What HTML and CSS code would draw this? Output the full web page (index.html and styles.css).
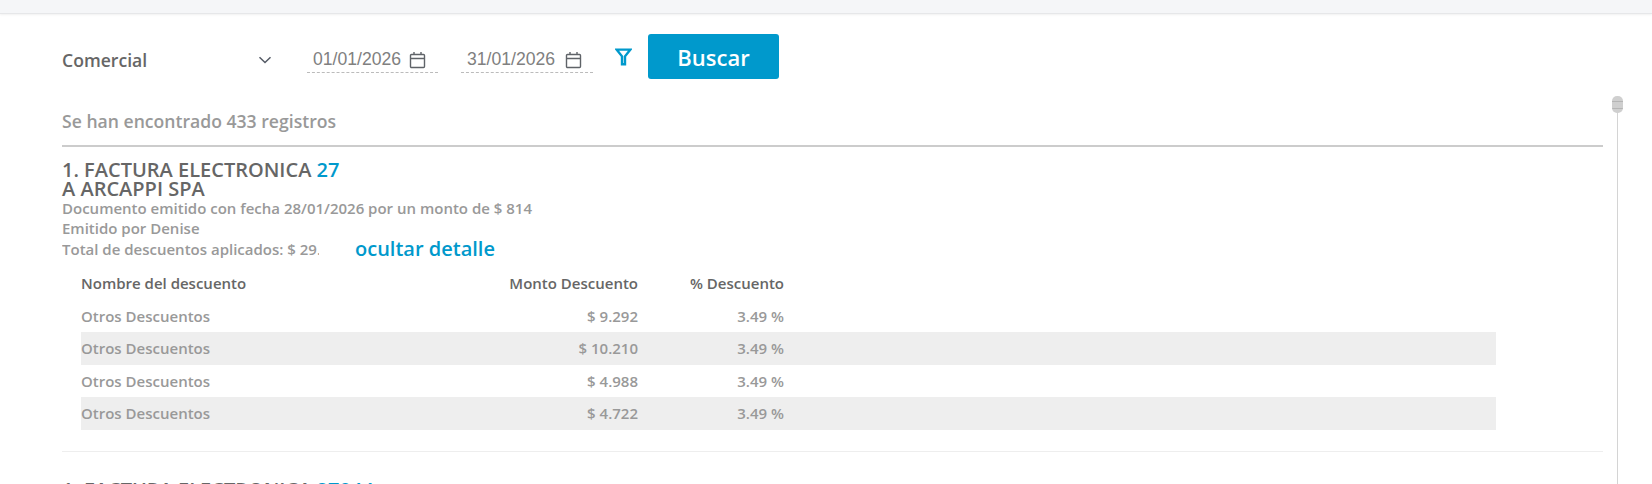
FILE: index.html
```html
<!DOCTYPE html>
<html lang="es">
<head>
    <meta charset="UTF-8">
    <meta name="viewport" content="width=device-width, initial-scale=1.0">
    <title>Descuentos</title>
    <link rel="stylesheet" href="styles.css">
</head>
<body>
    <div class="topbar"></div>
    <main class="content">
        <div class="filters">
            <div class="select">
                <span>Comercial</span>
                <svg class="chevron" width="14" height="8" viewBox="0 0 14 8"><path d="M1.5 1.2 7 6.5l5.5-5.3" fill="none" stroke="#555b66" stroke-width="1.5"/></svg>
            </div>
            <div class="date">
                <span>01/01/2026</span>
                <svg width="17" height="18" viewBox="0 0 17 18"><path d="M2.5 3.5h12a1 1 0 0 1 1 1v11a1 1 0 0 1-1 1h-12a1 1 0 0 1-1-1v-11a1 1 0 0 1 1-1zM1.5 7.5h14M5 1v3M12 1v3" fill="none" stroke="#5f6368" stroke-width="1.4"/></svg>
            </div>
            <div class="date">
                <span>31/01/2026</span>
                <svg width="17" height="18" viewBox="0 0 17 18"><path d="M2.5 3.5h12a1 1 0 0 1 1 1v11a1 1 0 0 1-1 1h-12a1 1 0 0 1-1-1v-11a1 1 0 0 1 1-1zM1.5 7.5h14M5 1v3M12 1v3" fill="none" stroke="#5f6368" stroke-width="1.4"/></svg>
            </div>
            <svg class="funnel" width="17" height="18" viewBox="0 0 17 18"><path d="M1.6 1.6h13.8L10 8.3v8H7v-8z" fill="none" stroke="#0099cc" stroke-width="2.4"/></svg>
            <button class="search" type="button">Buscar</button>
        </div>

        <p class="total">Se han encontrado 433 registros</p>

        <section class="doc">
            <h2><span class="doc-type">1. FACTURA ELECTRONICA</span> <span class="doc-num">27044</span></h2>
            <h2>A ARCAPPI SPA</h2>
            <p class="meta">Documento emitido con fecha 28/01/2026 por un monto de $ 814</p>
            <p class="meta">Emitido por Denise</p>
            <div class="meta-row">
                <p class="meta clipped">Total de descuentos aplicados: $ 29.212</p>
                <a class="toggle">ocultar detalle</a>
            </div>
            <table class="detail">
                <thead>
                    <tr><th class="name">Nombre del descuento</th><th class="num amount">Monto Descuento</th><th class="num pct">% Descuento</th><th></th></tr>
                </thead>
                <tbody>
                    <tr><td>Otros Descuentos</td><td class="num">$ 9.292</td><td class="num">3.49 %</td><td></td></tr>
                    <tr><td>Otros Descuentos</td><td class="num">$ 10.210</td><td class="num">3.49 %</td><td></td></tr>
                    <tr><td>Otros Descuentos</td><td class="num">$ 4.988</td><td class="num">3.49 %</td><td></td></tr>
                    <tr><td>Otros Descuentos</td><td class="num">$ 4.722</td><td class="num">3.49 %</td><td></td></tr>
                </tbody>
            </table>
        </section>

        <section class="doc next">
            <h2><span class="doc-type">1. FACTURA ELECTRONICA</span> <span class="doc-num open">27044</span></h2>
        </section>
    </main>
    <div class="scrollbar"><div class="thumb"></div></div>
</body>
</html>
```

FILE: styles.css
```css
html, body {
    height: 100%;
    margin: 0;
    overflow: hidden;
    background-color: #ffffff;
    font-family: 'Open Sans', sans-serif;
    color: #666666;
}
p, h2 {
    margin: 0;
}
.topbar {
    height: 13px;
    background-color: #f5f6f8;
    border-bottom: 1px solid #e6e7e9;
    box-shadow: 0 1px 2px rgba(0, 0, 0, 0.06);
}
.content {
    width: 1541px;
    margin-left: 62px;
}
.filters {
    display: flex;
    align-items: flex-start;
    height: 45px;
    padding-top: 20px;
}
.select {
    display: flex;
    align-items: center;
    justify-content: space-between;
    width: 210px;
    height: 52px;
    margin-right: 35px;
    font-size: 17.6px;
    font-weight: 600;
}
.date {
    display: flex;
    align-items: center;
    justify-content: space-between;
    box-sizing: border-box;
    width: 131px;
    height: 39px;
    margin-right: 23px;
    padding: 13px 12px 0 6px;
    border-bottom: 1px dashed #bbbbbb;
    font-family: 'Liberation Sans', sans-serif;
    font-size: 17.6px;
    color: #808080;
}
.date + .date {
    width: 132px;
    padding-right: 11px;
}
.funnel {
    margin: 14px 0 0 -1px;
}
.search {
    width: 131px;
    height: 45px;
    margin-left: 16px;
    border: none;
    border-radius: 3px;
    background-color: #0099cc;
    color: #ffffff;
    font-family: 'Open Sans', sans-serif;
    font-size: 22px;
    font-weight: 600;
}
.total {
    margin-top: 29px;
    height: 37px;
    line-height: 26px;
    border-bottom: 2px solid #cccccc;
    font-size: 17.6px;
    font-weight: 600;
    color: #999999;
}
.doc {
    padding: 13px 0 21px;
    border-bottom: 1px solid #eeeeee;
}
.doc h2 {
    font-size: 20px;
    line-height: 19px;
    font-weight: 600;
    color: #666666;
}
.doc-num {
    display: inline-block;
    width: 23px;
    overflow: hidden;
    vertical-align: bottom;
    color: #0099cc;
}
.doc-num.open {
    width: auto;
}
.meta {
    font-size: 15px;
    line-height: 20px;
    font-weight: 600;
    color: #999999;
}
.meta-row {
    display: flex;
    align-items: center;
}
.clipped {
    width: 257px;
    overflow: hidden;
    white-space: nowrap;
}
.toggle {
    margin-left: 36px;
    font-size: 20px;
    line-height: 22px;
    font-weight: 600;
    color: #0099cc;
}
.detail {
    width: 1415px;
    margin: 7px 0 0 19px;
    border-collapse: collapse;
    table-layout: fixed;
    font-size: 15px;
}
.detail th, .detail td {
    box-sizing: border-box;
    height: 32px;
    padding: 0 0 1px;
    text-align: left;
    font-weight: 600;
}
.detail th {
    height: 33px;
    color: #666666;
}
.detail td {
    color: #999999;
}
.detail .num {
    text-align: right;
}
.detail .name {
    width: 400px;
}
.detail .amount {
    width: 157px;
}
.detail .pct {
    width: 146px;
}
.detail tbody tr:nth-child(even) {
    background-color: #eeeeee;
}
.detail tbody tr:nth-child(even) td {
    height: 33px;
}
.next {
    border-bottom: none;
    padding-top: 28px;
}
.scrollbar {
    position: absolute;
    top: 96px;
    left: 1612px;
    width: 11px;
    height: 388px;
}
.scrollbar::before {
    content: "";
    position: absolute;
    top: 0;
    bottom: 0;
    left: 5px;
    width: 1px;
    background-color: #d4d4d4;
}
.thumb {
    position: absolute;
    top: 0;
    left: 0;
    width: 11px;
    height: 17px;
    border-radius: 5px;
    background: repeating-linear-gradient(#cfcfcf 0 5px, #b5b5b5 5px 6px, #cfcfcf 6px 7px);
}
```
